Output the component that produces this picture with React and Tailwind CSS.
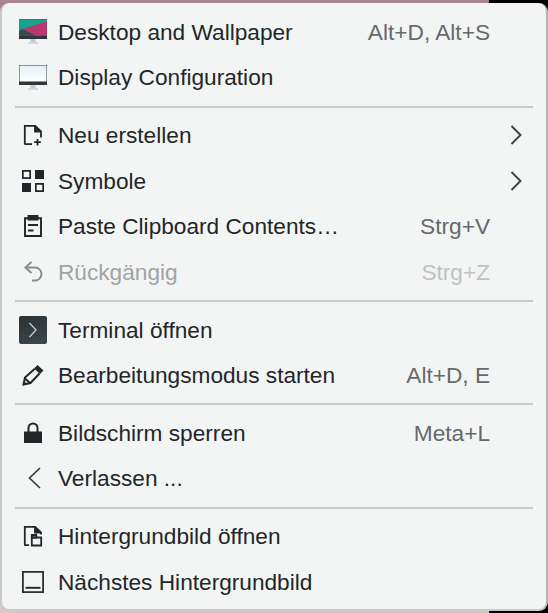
const ink = '#232629';

function Monitor({ screen }) {
  return (
    <svg width="28" height="25" viewBox="0 0 28 25">
      <defs>
        <linearGradient id="white-screen" x1="0" y1="0" x2="0" y2="1">
          <stop offset="0" stopColor="#e3eff7" />
          <stop offset="1" stopColor="#ffffff" />
        </linearGradient>
      </defs>
      <rect x="0" y="0" width="28" height="20" fill="#31363b" />
      {screen === 'wallpaper' ? (
        <>
          <rect x="0" y="0.500" width="28" height="16" fill="#2b88a0" />
          <polygon points="0,0.500 28,0.500 28,2 4,10 0,6" fill="#17a58c" />
          <polygon points="4,10 28,2 28,16.500 16,16.500" fill="#b8386f" />
          <polygon points="0,16.500 16,16.500 4,10 0,12" fill="#3a4a50" />
        </>
      ) : (
        <rect x="0.500" y="0.500" width="27" height="16" fill="url(#white-screen)" />
      )}
      <rect x="11.500" y="20" width="5" height="3" fill="#c5c9cc" />
      <rect x="9" y="23" width="10" height="2" fill="#d5d8da" />
    </svg>
  );
}

const NewFile = () => (
  <svg width="20" height="22" viewBox="0 0 20 22" fill="none" stroke={ink} strokeWidth="1.800">
    <path d="M9 20.200H2.500a.7.7 0 0 1-.7-.7V1.800h10.400L18 7.500v6" />
    <path d="M12 1.800v5.700h6" fill={ink} />
    <path d="M14.500 15v6.500M11.200 18.200h6.600" />
  </svg>
);

const Grid = () => (
  <svg width="22" height="22" viewBox="0 0 22 22" fill={ink}>
    <path fillRule="evenodd" d="M0 0h9v9H0zM1.700 1.700v5.600h5.600V1.700z" />
    <rect x="13" y="0" width="9" height="9" />
    <rect x="0" y="13" width="9" height="9" />
    <path fillRule="evenodd" d="M13 13h9v9h-9zM14.700 14.700v5.600h5.600v-5.600z" />
  </svg>
);

const Clipboard = () => (
  <svg width="18" height="22" viewBox="0 0 18 22" fill="none" stroke={ink} strokeWidth="1.900">
    <path d="M4 3.200H1v17.800h16V3.200H14" />
    <path d="M4.500 1h9v3.500h-9z" fill={ink} />
    <path d="M4 10h10M4 15.500h5.500" />
  </svg>
);

const Undo = () => (
  <svg width="19" height="21" viewBox="0 0 19 21" fill="none" stroke="#8a8d8f" strokeWidth="2">
    <path d="M7.500 1 1.500 6.500l6 5.500" />
    <path d="M1.500 6.500H11a6.500 6.500 0 0 1 0 13H8" />
  </svg>
);

const TerminalIcon = () => (
  <div className="flex h-7 w-7 items-center justify-center rounded-[2px] bg-[linear-gradient(160deg,#2a3235,#40474a)]">
    <svg width="10" height="16" viewBox="0 0 10 16" fill="none" stroke="#c9cccd" strokeWidth="1.300">
      <path d="M1.500 1 8 8l-6.500 7" />
    </svg>
  </div>
);

const Pencil = () => (
  <svg width="22" height="22" viewBox="0 0 22 22" fill="none" stroke={ink} strokeWidth="2">
    <path d="M15.500 1 21.500 6.500 18 10 12 4.500z" fill={ink} stroke="none" />
    <path d="M12.500 5 3 13.500 1.500 20.500 8.500 19 17.500 9.500" />
    <path d="M3 14.500 8 19" />
    <path d="M1 21.500 2 17 5.500 20.500z" fill={ink} stroke="none" />
  </svg>
);

const Lock = () => (
  <svg width="18" height="21" viewBox="0 0 18 21" fill="none">
    <path d="M4.500 10V6a4.500 4.500 0 0 1 9 0v4" stroke={ink} strokeWidth="2" />
    <rect x="0" y="9.500" width="18" height="11.500" fill={ink} />
  </svg>
);

const OpenImage = () => (
  <svg width="20" height="22" viewBox="0 0 20 22" fill="none" stroke={ink} strokeWidth="1.800">
    <path d="M6 20.200H2.500a.7.7 0 0 1-.7-.7V1.800h10.400L18 7.500v2" />
    <path d="M12 1.800v5.700h6" fill={ink} />
    <path d="M8.800 12.500h9.400v8H8.800z" />
    <path d="M8.800 12.500h4.500V10H8.800z" />
  </svg>
);

const WindowBar = () => (
  <svg width="22" height="22" viewBox="0 0 22 22" fill="none" stroke={ink} strokeWidth="1.700">
    <rect x="0.900" y="0.900" width="20.200" height="20.200" />
    <path d="M3.500 16.800h15" strokeWidth="1.900" />
  </svg>
);

const LeaveChevron = () => (
  <svg width="13" height="22" viewBox="0 0 13 22" fill="none" stroke="#31363b" strokeWidth="1.600" className="ml-[2px]">
    <path d="M12 1 1.500 11 12 21" />
  </svg>
);

const SubChevron = () => (
  <svg width="12" height="20" viewBox="0 0 12 20" fill="none" stroke="#3b4045" strokeWidth="1.900" className="mr-[10px]">
    <path d="M1.500 1 10.500 10l-9 9" />
  </svg>
);

const sections = [
  [
    { icon: <Monitor screen="wallpaper" />, label: 'Desktop and Wallpaper', hint: 'Alt+D, Alt+S' },
    { icon: <Monitor screen="white" />, label: 'Display Configuration' },
  ],
  [
    { icon: <NewFile />, label: 'Neu erstellen', sub: true },
    { icon: <Grid />, label: 'Symbole', sub: true },
    { icon: <Clipboard />, label: 'Paste Clipboard Contents…', hint: 'Strg+V' },
    { icon: <Undo />, label: 'Rückgängig', hint: 'Strg+Z', off: true },
  ],
  [
    { icon: <TerminalIcon />, label: 'Terminal öffnen' },
    { icon: <Pencil />, label: 'Bearbeitungsmodus starten', hint: 'Alt+D, E' },
  ],
  [
    { icon: <Lock />, label: 'Bildschirm sperren', hint: 'Meta+L' },
    { icon: <LeaveChevron />, label: 'Verlassen ...' },
  ],
  [
    { icon: <OpenImage />, label: 'Hintergrundbild öffnen' },
    { icon: <WindowBar />, label: 'Nächstes Hintergrundbild' },
  ],
];

function Row({ item }) {
  return (
    <div className="flex h-[45.5px] items-center pl-[17px] pr-[14px]">
      <div className="flex h-7 w-7 shrink-0 items-center justify-center">{item.icon}</div>
      <span className={`ml-[11px] flex-1 ${item.off ? 'text-[#a1a3a5]' : 'text-[#232629]'}`}>{item.label}</span>
      {item.hint && (
        <span className={`mr-[42px] ${item.off ? 'text-[#c0c2c3]' : 'text-[#66696c]'}`}>{item.hint}</span>
      )}
      {item.sub && <SubChevron />}
    </div>
  );
}

export default function App() {
  return (
    <div className="h-[613px] w-[548px] overflow-hidden bg-[linear-gradient(90deg,transparent_489px,#000000_489px),linear-gradient(180deg,#a98593_50%,#e0c8c2_50%)] pt-[3px] font-['Liberation_Sans',sans-serif] text-[22.67px]">
      <div className="flex h-[608px] flex-col rounded-[9px] border-2 border-t-0 border-[#c9cbcb] border-r-[#b4b6b6] bg-[#f3f5f5] pt-[6px]">
        {sections.map((rows, i) => (
          <div key={i}>
            {i > 0 && (
              <div className="flex h-[12.4px] items-center px-[13px] pt-[1px]">
                <div className="h-[2px] w-full bg-[#c8caca]" />
              </div>
            )}
            {rows.map(item => <Row key={item.label} item={item} />)}
          </div>
        ))}
      </div>
    </div>
  );
}
